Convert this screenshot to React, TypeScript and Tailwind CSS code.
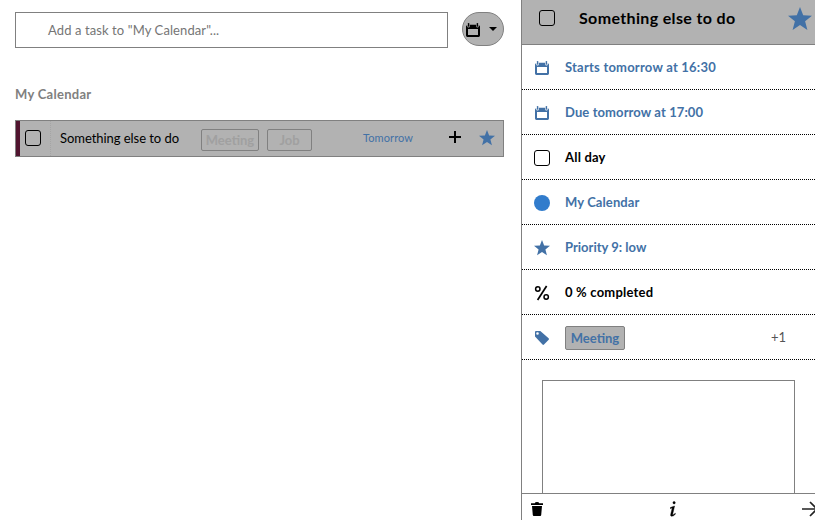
import type { ReactNode } from 'react';

const STAR = 'M12 0l3.2 8.2 8.8.5-6.9 5.6 2.3 8.7L12 18.1 4.6 23l2.3-8.7L0 8.7l8.8-.5z';

function Star({ className }: { className: string }) {
  return (
    <svg viewBox="0 0 24 24" className={`shrink-0 fill-[#4271a6] ${className}`}>
      <path d={STAR} />
    </svg>
  );
}

function CalendarIcon({ className }: { className: string }) {
  return (
    <svg viewBox="0 0 14 14" className={`h-[14px] w-[14px] shrink-0 ${className}`} fill="currentColor">
      <path
        fillRule="evenodd"
        d="M1.300 2.200Q0 2.400 0 3.600v9Q0 14 1.400 14h11.200q1.400 0 1.400-1.400v-9q0-1.200-1.300-1.400V3.200q0 1.300-1.200 1.300T10.200 3.200V1.800H3.800v1.400q0 1.300-1.300 1.300T1.300 3.200zM2 6v6h10V6z"
      />
      <rect x="1.900" y="0" width="1.400" height="3.700" rx=".6" />
      <rect x="10.700" y="0" width="1.400" height="3.700" rx=".6" />
    </svg>
  );
}

function Checkbox() {
  return <span className="block h-4 w-4 shrink-0 rounded-[3px] border border-black" />;
}

function Row({ icon, children }: { icon: ReactNode; children: ReactNode }) {
  return (
    <div className="flex h-[45px] shrink-0 items-center border-b border-dotted border-black pl-3">
      <span className="flex w-4 justify-center pt-px">{icon}</span>
      <div className="ml-[15px] flex flex-1 items-center whitespace-nowrap text-[13px] leading-5 font-bold">{children}</div>
    </div>
  );
}

export default function App() {
  return (
    <div className="flex h-[520px] w-[815px] overflow-hidden bg-white font-['Lato',sans-serif] text-[13px] leading-5 text-black">
      <main className="w-[521px] shrink-0 pt-3 pr-[17px] pl-[15px]">
        <div className="flex items-start justify-between">
          <div className="flex h-9 w-[433px] items-center border border-[#808080] pb-px pl-8 text-[#757575]">
            <span className="tracking-[0.1px]">Add a task to "My Calendar"...</span>
          </div>
          <div className="flex h-[34px] w-[42px] items-center rounded-[17px] border border-[#808080] bg-[#b2b2b2] pl-[3px]">
            <CalendarIcon className="mt-px text-black" />
            <svg viewBox="0 0 8 4" className="ml-[9px] h-1 w-2">
              <path d="M0 0h8L4 4z" />
            </svg>
          </div>
        </div>
        <h2 className="mt-9 font-bold tracking-[0.28px] text-[#808080]">My Calendar</h2>
        <div className="mt-4 flex h-[37px] items-center border border-[#808080] bg-[#b2b2b2]">
          <span className="h-full w-1 bg-[#51142f]" />
          <span className="-mt-px ml-[5px]"><Checkbox /></span>
          <span className="ml-[9px] h-full border-l border-dotted border-[#a5a5a5]" />
          <span className="ml-[9px] w-[141px] pb-px whitespace-nowrap tracking-[-0.05px]">Something else to do</span>
          <span className="mt-[2px] flex h-[22px] w-[58px] items-center justify-center rounded-[2px] border border-[#808080] font-bold text-[#a0a0a0]">Meeting</span>
          <span className="mt-[2px] ml-2 flex h-[22px] w-[45px] items-center justify-center rounded-[2px] border border-[#808080] font-bold text-[#a0a0a0]">Job</span>
          <span className="ml-[51px] w-[86px] pb-[2px] text-[11px] tracking-[0.1px] text-[#4271a6]">Tomorrow</span>
          <svg viewBox="0 0 12 12" className="-mt-[3px] h-3 w-3 shrink-0">
            <path d="M5 0h2v5h5v2H7v5H5V7H0V5h5z" />
          </svg>
          <Star className="-mt-px ml-[18px] h-4 w-4" />
        </div>
      </main>
      <aside className="flex w-[294px] shrink-0 flex-col overflow-hidden border-l border-[#808080]">
        <header className="flex h-[45px] shrink-0 items-center border-b border-[#808080] bg-[#b2b2b2] pb-2 pl-[17px]">
          <Checkbox />
          <span className="ml-6 w-[209px] whitespace-nowrap text-[16px] font-bold tracking-[0.35px]">Something else to do</span>
          <Star className="mt-[2px] h-6 w-6" />
        </header>
        <Row icon={<CalendarIcon className="text-[#4271a6]" />}>
          <span className="tracking-[0.22px] text-[#4271a6]">Starts tomorrow at 16:30</span>
        </Row>
        <Row icon={<CalendarIcon className="text-[#4271a6]" />}>
          <span className="tracking-[0.1px] text-[#4271a6]">Due tomorrow at 17:00</span>
        </Row>
        <Row icon={<Checkbox />}>
          <span className="tracking-[0.2px]">All day</span>
        </Row>
        <Row icon={<span className="h-4 w-4 rounded-full bg-[#317ccc]" />}>
          <span className="tracking-[0.1px] text-[#4271a6]">My Calendar</span>
        </Row>
        <Row icon={<Star className="h-4 w-4" />}>
          <span className="text-[#4271a6]">Priority 9: low</span>
        </Row>
        <Row
          icon={
            <svg viewBox="0 0 16 16" className="h-4 w-4" fill="none" stroke="black" strokeWidth="1.500">
              <circle cx="3.800" cy="4" r="2.200" />
              <circle cx="12.200" cy="12" r="2.200" />
              <path d="M12.600 1L3.600 15" strokeWidth="1.700" />
            </svg>
          }
        >
          <span className="tracking-[0.2px]">0 % completed</span>
        </Row>
        <Row
          icon={
            <svg viewBox="0 0 16 16" className="h-4 w-4 fill-[#4271a6]">
              <path fillRule="evenodd" d="M1 2q0-1 1-1h4.300l8.300 7.300q.8.800.1 1.500L10 14.600q-.7.700-1.500 0L1 6.500zM3.500 2.200a1.300 1.300 0 1 0 0 2.600 1.300 1.300 0 0 0 0-2.600z" />
            </svg>
          }
        >
          <span className="mt-[2px] flex h-6 w-[60px] items-center justify-center rounded-[2px] border border-[#808080] bg-[#b2b2b2] pb-px text-[#4271a6]">Meeting</span>
          <span className="ml-[146px] font-normal text-[#555]">+1</span>
        </Row>
        <div className="min-h-0 flex-1 pt-5 pl-5">
          <div className="h-full w-[253px] border border-b-0 border-[#808080]" />
        </div>
        <footer className="flex h-[27px] shrink-0 items-center border-t border-[#808080] pt-[4px] pl-[9px]">
          <svg viewBox="0 0 12 14" className="h-[14px] w-3 shrink-0">
            <path d="M0 1.200h3.800Q4 0 6 0t2.200 1.200H12V3H0zM1 4h10l-.8 9q-.1 1-1 1H2.800q-.9 0-1-1z" />
          </svg>
          <svg viewBox="0 0 6 16" className="-mt-px ml-[127px] h-4 w-[6px] shrink-0" stroke="black" strokeWidth=".4">
            <circle cx="4.100" cy="1.700" r="1.200" />
            <path d="M0 6.800Q2.500 5.400 4.600 5L2.700 13.200q-.1.700.4.600.7-.1 2.100-1.500l.4.600Q3.300 15.400 1.700 15.300.2 15.200.7 13.300L2.200 7.100.2 7.600z" />
          </svg>
          <svg viewBox="0 0 16 16" className="-mt-px ml-[126px] h-4 w-4 shrink-0" fill="none" stroke="#222" strokeWidth="1.700">
            <path d="M0 8h14M8 1l7 7-7 7" />
          </svg>
        </footer>
      </aside>
    </div>
  );
}
